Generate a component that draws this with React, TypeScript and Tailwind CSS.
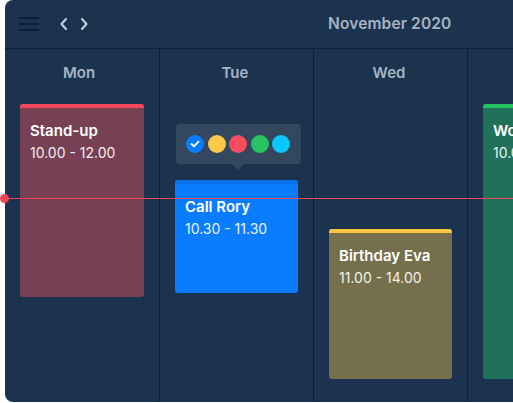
import React from "react";

const Card = ({
  title,
  time,
  bar,
  body,
  height,
  mt,
}: {
  title: string;
  time: string;
  bar: string;
  body: string;
  height: string;
  mt: string;
}) => (
  <div className={`ml-[15px] mr-[15px] ${mt} ${height} ${body} rounded-[3px] overflow-hidden flex flex-col`}>
    <div className={`h-[4px] ${bar}`} />
    <div className="px-[10px] pt-[12px] whitespace-nowrap">
      <div className="text-[15px] leading-[22px] font-semibold text-white">{title}</div>
      <div className="text-[14px] leading-[21px] text-white/90">{time}</div>
    </div>
  </div>
);

export default function App() {
  return (
    <div
      className="relative w-[513px] h-[403px] bg-white overflow-hidden"
      style={{ fontFamily: "Inter, 'Noto Sans', sans-serif" }}
    >
      <div className="ml-[5px] w-[620px] h-[402px] bg-[#1c3350] rounded-l-lg flex flex-col">
        <div className="h-[49px] border-b border-[#0c2038] flex items-center shrink-0 relative">
          <svg className="ml-[14px]" width="20" height="14" viewBox="0 0 20 14">
            <rect x="0" y="0" width="20" height="2" fill="#0b1f38" />
            <rect x="0" y="6" width="20" height="2" fill="#0b1f38" />
            <rect x="0" y="12" width="20" height="2" fill="#0b1f38" />
          </svg>
          <svg className="ml-[20px]" width="10" height="12" viewBox="0 0 10 12">
            <path d="M7 1 L2.5 6 L7 11" stroke="#c8d1dc" strokeWidth="2" fill="none" strokeLinecap="round" strokeLinejoin="round" />
          </svg>
          <svg className="ml-[10px]" width="10" height="12" viewBox="0 0 10 12">
            <path d="M3 1 L7.5 6 L3 11" stroke="#c8d1dc" strokeWidth="2" fill="none" strokeLinecap="round" strokeLinejoin="round" />
          </svg>
          <div className="absolute left-[323px] top-0 h-[48px] flex items-center text-[15.5px] font-semibold text-[#a6b3c3] tracking-[0.15px]">
            November 2020
          </div>
        </div>
        <div className="flex flex-1">
          <div className="w-[155px] shrink-0 border-r border-[#0c2038] flex flex-col">
            <div className="h-[48px] flex items-center justify-center pr-[6px] text-[15px] font-semibold text-[#a6b3c3]">Mon</div>
            <Card title="Stand-up" time="10.00 - 12.00" bar="bg-[#f5485b]" body="bg-[#774055]" height="h-[193px]" mt="mt-[7px]" />
          </div>
          <div className="w-[154px] shrink-0 border-r border-[#0c2038] flex flex-col relative">
            <div className="h-[48px] flex items-center justify-center pr-[3px] text-[15px] font-semibold text-[#a6b3c3]">Tue</div>
            <div className="absolute left-[16px] top-[75px] w-[125px] h-[40px] bg-[#33485f] rounded-[4px] flex items-center pl-[10px] gap-[3.5px]">
              <div className="w-[18px] h-[18px] rounded-full bg-[#0a7cff] flex items-center justify-center">
                <svg width="10" height="8" viewBox="0 0 10 8">
                  <path d="M1.5 4 L4 6.3 L8.5 1.7" stroke="white" strokeWidth="1.8" fill="none" strokeLinecap="round" strokeLinejoin="round" />
                </svg>
              </div>
              <div className="w-[18px] h-[18px] rounded-full bg-[#fdc84a]" />
              <div className="w-[18px] h-[18px] rounded-full bg-[#f44e5e]" />
              <div className="w-[18px] h-[18px] rounded-full bg-[#27c464]" />
              <div className="w-[18px] h-[18px] rounded-full bg-[#0ac8ff]" />
              <div className="absolute left-[56px] top-[40px] w-0 h-0 border-l-[6px] border-r-[6px] border-t-[6px] border-l-transparent border-r-transparent border-t-[#33485f]" />
            </div>
            <Card title="Call Rory" time="10.30 - 11.30" bar="bg-[#0b70e8]" body="bg-[#0a7cff]" height="h-[113px]" mt="mt-[83px]" />
          </div>
          <div className="w-[154px] shrink-0 border-r border-[#0c2038] flex flex-col">
            <div className="h-[48px] flex items-center justify-center pr-[3px] text-[15px] font-semibold text-[#a6b3c3]">Wed</div>
            <Card title="Birthday Eva" time="11.00 - 14.00" bar="bg-[#fbc740]" body="bg-[#75704b]" height="h-[150px]" mt="mt-[132px]" />
          </div>
          <div className="w-[154px] shrink-0 border-r border-[#0c2038] flex flex-col">
            <div className="h-[48px]" />
            <Card title="Workshop" time="10.00 - 17.00" bar="bg-[#25c460]" body="bg-[#1f7259]" height="h-[275px]" mt="mt-[7px]" />
          </div>
        </div>
      </div>
      <div className="absolute left-[5px] right-0 top-[197.5px] h-px bg-[#f04458]" />
      <div className="absolute left-0 top-[193.5px] w-[9px] h-[9px] rounded-full bg-[#f04458]" />
    </div>
  );
}
